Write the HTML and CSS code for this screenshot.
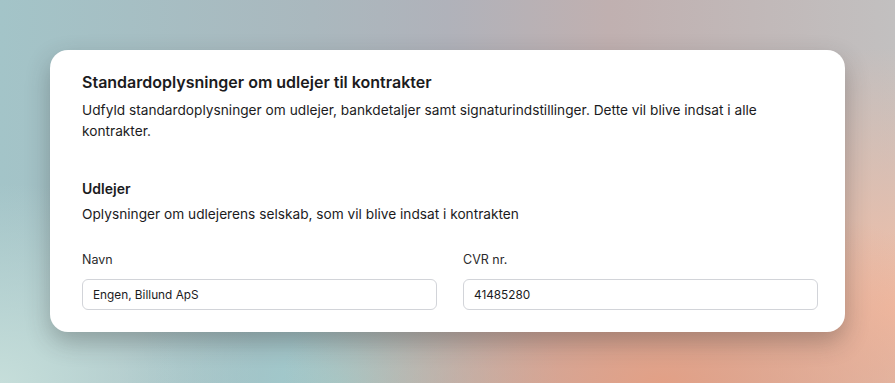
FILE: index.html
```html
<!DOCTYPE html>
<html lang="da">
<head>
    <meta charset="UTF-8">
    <meta name="viewport" content="width=device-width, initial-scale=1.0">
    <title>Udlejer</title>
    <link rel="stylesheet" href="styles.css">
</head>
<body>

    <div class="card">
        <div class="intro">
            <h2 class="title">Standardoplysninger om udlejer til kontrakter</h2>
            <p class="desc">Udfyld standardoplysninger om udlejer, bankdetaljer samt signaturindstillinger. Dette vil blive indsat i alle kontrakter.</p>
        </div>

        <div class="section">
            <h3 class="sec-title">Udlejer</h3>
            <p class="desc">Oplysninger om udlejerens selskab, som vil blive indsat i kontrakten</p>
        </div>

        <div class="fields">
            <label class="field">
                <span class="lbl">Navn</span>
                <input type="text" value="Engen, Billund ApS">
            </label>
            <label class="field">
                <span class="lbl">CVR nr.</span>
                <input type="text" value="41485280">
            </label>
        </div>
    </div>

</body>
</html>
```

FILE: styles.css
```css
/* Général */
body {
    margin: 0;
    height: 383px;
    overflow: hidden;
    font-family: 'Inter', 'Liberation Sans', sans-serif;
    color: #1b1b1d;
    background:
        radial-gradient(ellipse 380px 190px at 74% 100%, rgba(226, 160, 134, 1), rgba(226, 160, 134, 0) 100%),
        radial-gradient(ellipse 300px 260px at 100% 80%, rgba(242, 190, 166, 1), rgba(242, 190, 166, 0) 100%),
        radial-gradient(ellipse 220px 120px at 38% 100%, rgba(158, 204, 206, 1), rgba(158, 204, 206, 0) 100%),
        radial-gradient(ellipse 260px 200px at 0% 100%, rgba(198, 222, 218, 1), rgba(198, 222, 218, 0) 100%),
        linear-gradient(90deg, #a3c4c8 0%, #aab8be 35%, #b0b2ba 50%, #c0b0b0 68%, #c2c0c0 100%);
    padding: 50px 50px 0;
    box-sizing: border-box;
}

/* Carte */
.card {
    background: #fff;
    border-radius: 18px;
    box-shadow: 0 10px 24px rgba(40, 40, 40, 0.3);
    padding: 22px 27px 22px 32px;
    height: 282px;
    box-sizing: border-box;
}

.title {
    font-size: 16px;
    font-weight: 600;
    margin: 0 0 8px;
    line-height: 20px;
}

.desc {
    font-size: 13.7px;
    line-height: 21px;
    margin: 0;
}

.section {
    margin-top: 37px;
}

.sec-title {
    font-size: 14px;
    font-weight: 600;
    margin: 0 0 5px;
    line-height: 20px;
}

/* Champs */
.fields {
    display: flex;
    gap: 26px;
    margin-top: 27px;
}

.field {
    flex: 1;
    display: flex;
    flex-direction: column;
    gap: 11px;
}

.lbl {
    font-size: 12.5px;
    line-height: 16px;
    color: #2a2a2c;
}

.field input {
    font-family: inherit;
    font-size: 11.8px;
    color: #1b1b1d;
    height: 31px;
    box-sizing: border-box;
    border: 1px solid #d2d4d9;
    border-radius: 6px;
    padding: 0 10px;
    outline: none;
}
```
